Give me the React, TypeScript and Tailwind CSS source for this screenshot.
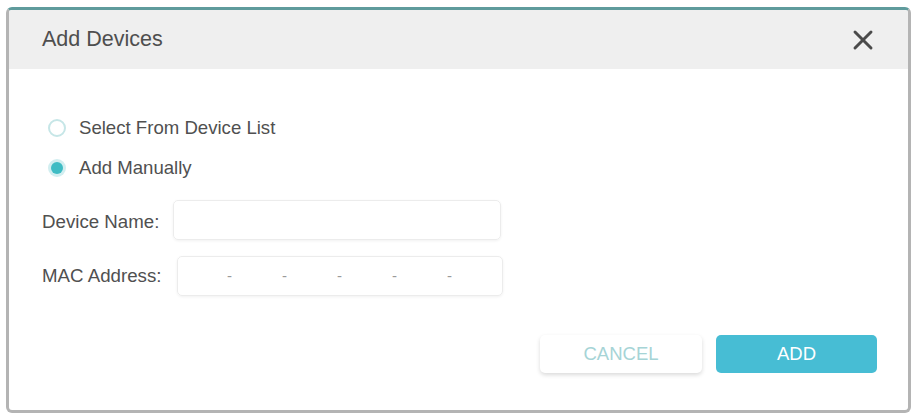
import { X } from "lucide-react"

// one radio row: ring or filled teal dot
const RadioRow = ({ label, checked }: { label: string; checked?: boolean }) => (
    <div className="flex items-center h-[24px] pl-[39px]">
        {checked ? (
            <div className="size-[18px] rounded-full bg-[#d2eef0] flex items-center justify-center">
                <div className="size-[12px] rounded-full bg-[#3fbcc4]"></div>
            </div>
        ) : (
            <div className="size-[18px] rounded-full border-2 border-[#c6e6e7] bg-white"></div>
        )}
        <span className="ml-[13px] text-[18.6px] text-[#505050]">{label}</span>
    </div>
)

export default function App() {
    return (
        <div className="w-[912px] h-[415px] bg-white pt-[7px] pl-[6px] font-['Liberation_Sans',Arial,sans-serif]">
            <div className="relative w-[905px] h-[406px] rounded-[6px] border-t-[3px] border-l-[3px] border-r-[3px] border-b-[3px] border-[#b4b4b4] border-t-[#5f9b9c] bg-white flex flex-col overflow-hidden">
                {/* light gap in the top line */}
                <div className="absolute -top-[3px] left-[351px] w-[20px] h-[3px] bg-[#c9d3d3]"></div>

                <div className="h-[59px] shrink-0 bg-[#efefef] flex items-center justify-between pl-[33px] pr-[29px]">
                    <h2 className="text-[21.5px] text-[#4e4e4e]">Add Devices</h2>
                    <X size={32} strokeWidth={2.2} className="text-[#4a4a4a]" />
                </div>

                <div className="flex flex-col pt-[47px]">
                    <div className="flex flex-col gap-[16px]">
                        <RadioRow label="Select From Device List" />
                        <RadioRow label="Add Manually" checked />
                    </div>

                    <div className="flex items-center mt-[20px] pl-[33px]">
                        <span className="w-[131px] text-[18.7px] text-[#505050] pt-[4px]">Device Name:</span>
                        <div className="w-[328px] h-[40px] rounded-[5px] border border-[#ececec] shadow-[0_1px_3px_rgba(0,0,0,0.06)]"></div>
                    </div>

                    <div className="flex items-center mt-[16px] pl-[33px]">
                        <span className="w-[135px] text-[18.7px] text-[#505050]">MAC Address:</span>
                        <div className="w-[326px] h-[40px] rounded-[5px] border border-[#ececec] shadow-[0_1px_3px_rgba(0,0,0,0.06)] flex items-center pl-[49px] gap-[50px] text-[#9a9a9a] text-[15px]">
                            <span>-</span>
                            <span>-</span>
                            <span>-</span>
                            <span>-</span>
                            <span>-</span>
                        </div>
                    </div>

                    <div className="flex justify-end gap-[14px] mt-[39px] pr-[31px]">
                        <button className="w-[162px] h-[38px] rounded-[5px] bg-white shadow-[0_2px_4px_rgba(0,0,0,0.15)] text-[18.5px] text-[#a6d4d6]">CANCEL</button>
                        <button className="w-[161px] h-[38px] rounded-[5px] bg-[#47bdd4] text-[18.5px] text-white">ADD</button>
                    </div>
                </div>
            </div>
        </div>
    )
}
